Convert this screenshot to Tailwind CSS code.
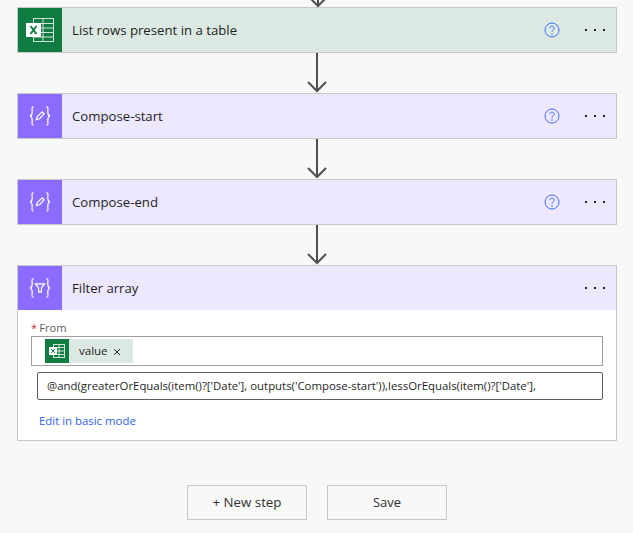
<!DOCTYPE html>
<html lang="en">
<head>
  <meta charset="UTF-8">
  <title>Flow editor</title>
  <script src="https://cdn.jsdelivr.net/npm/@tailwindcss/browser@4"></script>
</head>
<body class="h-[533px] overflow-hidden bg-[#f8f8f8] text-[#1f1f1f] font-['Open_Sans',sans-serif]">
  <div class="w-[600px] ml-[17px] pt-[7px] flex flex-col">

    <!-- List rows -->
    <div class="relative h-[46px] flex items-center border border-[#c8c8c8] bg-[#dce9e2]">
      <svg class="absolute left-[290px] top-[-8px]" width="20" height="8" viewBox="0 0 20 8" fill="none" stroke="#505050" stroke-width="2"><path d="M10 -4V6M2 -2L10 6L18 -2"/></svg>
      <div class="w-[44px] h-[44px] flex items-center justify-center bg-[#107c41]">
        <svg width="28" height="26" viewBox="0 0 28 26"><rect x="7.5" y="1.5" width="20" height="23" fill="none" stroke="#cfe5d8"/><path d="M17 1.5V24.5M7.5 6.5H27.5M7.5 11H27.5M7.5 15.5H27.5M7.5 20H27.5" stroke="#cfe5d8" fill="none"/><rect x="0" y="6" width="15" height="14" fill="#fff"/><path d="M4.5 9L10.5 17M10.5 9L4.5 17" stroke="#107c41" stroke-width="2" fill="none"/></svg>
      </div>
      <span class="ml-[10px] mt-[1px] text-[13.2px] flex-1">List rows present in a table</span>
      <svg class="mr-[25px]" width="16" height="16" viewBox="0 0 16 16" fill="none"><circle cx="8" cy="8" r="7" stroke="#3f6fff"/><path d="M5.8 6.2C5.8 3.6 10.2 3.6 10.2 6.2C10.2 7.8 8 7.8 8 9.8" stroke="#3f6fff"/><circle cx="8" cy="12" r="0.8" fill="#3f6fff"/></svg>
      <div class="flex gap-[7px] mr-[11px]"><i class="w-[2px] h-[2px] bg-[#222]"></i><i class="w-[2px] h-[2px] bg-[#222]"></i><i class="w-[2px] h-[2px] bg-[#222]"></i></div>
    </div>

    <div class="h-[40px] flex justify-center">
      <svg width="22" height="40" viewBox="0 0 22 40" fill="none" stroke="#505050" stroke-width="2"><path d="M11 0V38M2 29L11 38L20 29"/></svg>
    </div>

    <!-- Compose-start -->
    <div class="h-[46px] flex items-center border border-[#c8c8c8] bg-[#ede8ff]">
      <div class="w-[44px] h-[44px] flex items-center justify-center bg-[#8c6cff]">
        <svg width="22" height="22" viewBox="0 0 24 22" fill="none" stroke="#fff" stroke-width="1.3"><path d="M5 1C2.5 1 3.5 3 3.5 6.5C3.5 9.5 3 10.5 1 11C3 11.5 3.5 12.5 3.5 15.5C3.5 19 2.5 21 5 21M19 1C21.5 1 20.5 3 20.5 6.5C20.5 9.5 21 10.5 23 11C21 11.5 20.5 12.5 20.5 15.5C20.5 19 21.5 21 19 21"/><path d="M8 15L9 11.5L14.5 6.5L16.5 8.5L11.5 14L8 15Z"/></svg>
      </div>
      <span class="ml-[10px] mt-[1px] text-[13.2px] flex-1">Compose-start</span>
      <svg class="mr-[25px]" width="16" height="16" viewBox="0 0 16 16" fill="none"><circle cx="8" cy="8" r="7" stroke="#3f6fff"/><path d="M5.8 6.2C5.8 3.6 10.2 3.6 10.2 6.2C10.2 7.8 8 7.8 8 9.8" stroke="#3f6fff"/><circle cx="8" cy="12" r="0.8" fill="#3f6fff"/></svg>
      <div class="flex gap-[7px] mr-[11px]"><i class="w-[2px] h-[2px] bg-[#222]"></i><i class="w-[2px] h-[2px] bg-[#222]"></i><i class="w-[2px] h-[2px] bg-[#222]"></i></div>
    </div>

    <div class="h-[40px] flex justify-center">
      <svg width="22" height="40" viewBox="0 0 22 40" fill="none" stroke="#505050" stroke-width="2"><path d="M11 0V38M2 29L11 38L20 29"/></svg>
    </div>

    <!-- Compose-end -->
    <div class="h-[46px] flex items-center border border-[#c8c8c8] bg-[#ede8ff]">
      <div class="w-[44px] h-[44px] flex items-center justify-center bg-[#8c6cff]">
        <svg width="22" height="22" viewBox="0 0 24 22" fill="none" stroke="#fff" stroke-width="1.3"><path d="M5 1C2.5 1 3.5 3 3.5 6.5C3.5 9.5 3 10.5 1 11C3 11.5 3.5 12.5 3.5 15.5C3.5 19 2.5 21 5 21M19 1C21.5 1 20.5 3 20.5 6.5C20.5 9.5 21 10.5 23 11C21 11.5 20.5 12.5 20.5 15.5C20.5 19 21.5 21 19 21"/><path d="M8 15L9 11.5L14.5 6.5L16.5 8.5L11.5 14L8 15Z"/></svg>
      </div>
      <span class="ml-[10px] mt-[1px] text-[13.2px] flex-1">Compose-end</span>
      <svg class="mr-[25px]" width="16" height="16" viewBox="0 0 16 16" fill="none"><circle cx="8" cy="8" r="7" stroke="#3f6fff"/><path d="M5.8 6.2C5.8 3.6 10.2 3.6 10.2 6.2C10.2 7.8 8 7.8 8 9.8" stroke="#3f6fff"/><circle cx="8" cy="12" r="0.8" fill="#3f6fff"/></svg>
      <div class="flex gap-[7px] mr-[11px]"><i class="w-[2px] h-[2px] bg-[#222]"></i><i class="w-[2px] h-[2px] bg-[#222]"></i><i class="w-[2px] h-[2px] bg-[#222]"></i></div>
    </div>

    <div class="h-[40px] flex justify-center">
      <svg width="22" height="40" viewBox="0 0 22 40" fill="none" stroke="#505050" stroke-width="2"><path d="M11 0V38M2 29L11 38L20 29"/></svg>
    </div>

    <!-- Filter array -->
    <div class="h-[176px] border border-[#c8c8c8] bg-white">
      <div class="h-[44px] flex items-center bg-[#ede8ff]">
        <div class="w-[44px] h-[44px] flex items-center justify-center bg-[#8c6cff]">
          <svg width="22" height="22" viewBox="0 0 24 22" fill="none" stroke="#fff" stroke-width="1.3"><path d="M5 1C2.5 1 3.5 3 3.5 6.5C3.5 9.5 3 10.5 1 11C3 11.5 3.5 12.5 3.5 15.5C3.5 19 2.5 21 5 21M19 1C21.5 1 20.5 3 20.5 6.5C20.5 9.5 21 10.5 23 11C21 11.5 20.5 12.5 20.5 15.5C20.5 19 21.5 21 19 21"/><path d="M7 6.5H17L13.5 11V15.5H10.5V11L7 6.5Z"/></svg>
        </div>
        <span class="ml-[10px] mt-[1px] text-[13.2px] flex-1">Filter array</span>
        <div class="flex gap-[7px] mr-[11px]"><i class="w-[2px] h-[2px] bg-[#222]"></i><i class="w-[2px] h-[2px] bg-[#222]"></i><i class="w-[2px] h-[2px] bg-[#222]"></i></div>
      </div>
      <div class="px-[13px]">
        <div class="h-[26px] pt-[10px] flex text-[11.2px] leading-[16px] text-[#605e5c]"><span class="text-[#d13438] mr-[2px]">*</span>From</div>
        <div class="h-[30px] flex items-center pl-[13px] border border-[#a19f9d]">
          <div class="h-[24px] w-[88px] flex items-center bg-[#dce9e2]">
            <div class="w-[24px] h-[24px] flex items-center justify-center bg-[#107c41]">
              <svg width="16" height="14" viewBox="0 0 16 14"><rect x="4.5" y="0.5" width="11" height="13" fill="none" stroke="#cfe5d8"/><path d="M10 0.5V13.5M4.5 3.5H15.5M4.5 7H15.5M4.5 10.5H15.5" stroke="#cfe5d8" fill="none"/><rect x="0" y="3" width="8" height="8" fill="#fff"/><path d="M2 5L6 9M6 5L2 9" stroke="#107c41" fill="none"/></svg>
            </div>
            <span class="ml-[10px] text-[11.5px]">value</span>
            <svg class="ml-[5px] mt-[2px]" width="8" height="8" viewBox="0 0 8 8" fill="none" stroke="#333"><path d="M1 1L7 7M7 1L1 7"/></svg>
          </div>
        </div>
        <div class="h-[28px] mt-[6px] ml-[6px] flex items-center pl-[9px] border border-[#605e5c] rounded-[2px] text-[11.4px] whitespace-nowrap overflow-hidden">@and(greaterOrEquals(item()?['Date'], outputs('Compose-start')),lessOrEquals(item()?['Date'],</div>
        <div class="mt-[13px] ml-[8px] text-[11.4px] leading-[16px] text-[#2f5fe8]">Edit in basic mode</div>
      </div>
    </div>

    <div class="mt-[44px] flex justify-center gap-[20px]">
      <button class="w-[120px] h-[35px] border border-[#c8c8c8] text-[13.3px] text-[#323130]">+ New step</button>
      <button class="w-[120px] h-[35px] border border-[#c8c8c8] text-[13px] text-[#323130]">Save</button>
    </div>
  </div>
</body>
</html>
